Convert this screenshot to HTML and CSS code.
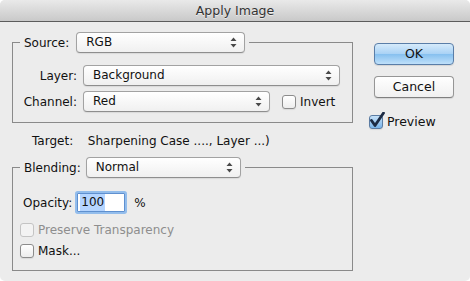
FILE: index.html
```html
<!DOCTYPE html>
<html lang="en">

<head>
    <meta charset="UTF-8">
    <title>Apply Image</title>
    <link rel="stylesheet" href="styles.css">
</head>

<body>
    <div class="window">
        <div class="titlebar">Apply Image</div>

        <div class="content">
            <div class="main">
                <fieldset class="group source">
                    <legend>
                        <span class="legend-label">Source:</span>
                        <span class="select w-source">RGB
                            <svg class="arrows" width="7" height="11" viewBox="0 0 7 11"><path d="M3.5 0.5 L6.5 4 H0.5 Z M3.5 10.5 L6.5 7 H0.5 Z" fill="#4a4a4a"/></svg>
                        </span>
                    </legend>
                    <div class="row">
                        <span class="lbl">Layer:</span>
                        <span class="select w-layer">Background
                            <svg class="arrows" width="7" height="11" viewBox="0 0 7 11"><path d="M3.5 0.5 L6.5 4 H0.5 Z M3.5 10.5 L6.5 7 H0.5 Z" fill="#4a4a4a"/></svg>
                        </span>
                    </div>
                    <div class="row">
                        <span class="lbl">Channel:</span>
                        <span class="select w-channel">Red
                            <svg class="arrows" width="7" height="11" viewBox="0 0 7 11"><path d="M3.5 0.5 L6.5 4 H0.5 Z M3.5 10.5 L6.5 7 H0.5 Z" fill="#4a4a4a"/></svg>
                        </span>
                        <span class="check invert-check"></span>
                        <span class="check-text">Invert</span>
                    </div>
                </fieldset>

                <div class="target">
                    <span class="target-label">Target:</span>
                    <span>Sharpening Case ...., Layer ...)</span>
                </div>

                <fieldset class="group blending">
                    <legend>
                        <span class="legend-label">Blending:</span>
                        <span class="select w-blend">Normal
                            <svg class="arrows" width="7" height="11" viewBox="0 0 7 11"><path d="M3.5 0.5 L6.5 4 H0.5 Z M3.5 10.5 L6.5 7 H0.5 Z" fill="#4a4a4a"/></svg>
                        </span>
                    </legend>
                    <div class="opacity-row">
                        <span>Opacity:</span>
                        <span class="field"><span class="selected">100</span></span>
                        <span class="percent">%</span>
                    </div>
                    <div class="check-row disabled">
                        <span class="check"></span>
                        <span class="check-text">Preserve Transparency</span>
                    </div>
                    <div class="check-row">
                        <span class="check"></span>
                        <span class="check-text">Mask...</span>
                    </div>
                </fieldset>
            </div>

            <div class="side">
                <div class="button default">OK</div>
                <div class="button">Cancel</div>
                <div class="preview">
                    <span class="check checked">
                        <svg class="tick" width="16" height="17" viewBox="0 0 16 17"><path d="M2.5 8.5 L6 13.5 L14.5 1" fill="none" stroke="#1c2b44" stroke-width="2.8" stroke-linecap="round" stroke-linejoin="round"/></svg>
                    </span>
                    <span class="check-text">Preview</span>
                </div>
            </div>
        </div>
    </div>
</body>

</html>
```

FILE: styles.css
```css
body {
    margin: 0;
    background-color: #fff;
    font-family: 'DejaVu Sans', 'Lucida Grande', sans-serif;
    font-size: 12px;
    color: #111;
}

.window {
    width: 470px;
    height: 281px;
    background-color: #ececec;
    border-radius: 5px;
    overflow: hidden;
}

.titlebar {
    height: 21px;
    line-height: 21px;
    text-align: center;
    font-size: 12.5px;
    color: #333;
    text-shadow: 0 1px 0 rgba(255, 255, 255, 0.6);
    background: linear-gradient(#e9e9e9, #c9c9c9);
    border-bottom: 1px solid #5c5c5c;
}

.content {
    display: flex;
}

.main {
    margin-left: 12px;
    width: 341px;
}

.group {
    box-sizing: border-box;
    width: 341px;
    margin: 0;
    border: 1px solid #8a8a8a;
    border-radius: 0;
    padding: 12px 10px 10px 7px;
}

.group legend {
    display: flex;
    align-items: center;
    padding: 0 4px;
}

.source {
    margin-top: 10px;
}

.blending {
    margin-top: 9px;
    padding-top: 15px;
    padding-bottom: 12px;
}

.select {
    position: relative;
    box-sizing: border-box;
    display: inline-block;
    height: 21px;
    line-height: 19px;
    padding-left: 9px;
    background: linear-gradient(#ffffff, #f0f0f0);
    border: 1px solid #a2a2a2;
    border-bottom-color: #8e8e8e;
    border-radius: 4px;
    box-shadow: 0 1px 1px rgba(0, 0, 0, 0.08);
}

.arrows {
    position: absolute;
    right: 7px;
    top: 4px;
}

.w-source {
    width: 169px;
    margin-left: 7px;
}

.w-layer {
    width: 257px;
}

.w-channel {
    width: 187px;
}

.w-blend {
    width: 155px;
    margin-left: 5px;
}

.row {
    display: flex;
    align-items: center;
    height: 21px;
}

.row + .row {
    margin-top: 5px;
}

.lbl {
    width: 57px;
    margin-right: 6px;
    text-align: right;
}

.check {
    position: relative;
    box-sizing: border-box;
    display: inline-block;
    width: 14px;
    height: 14px;
    background: linear-gradient(#ffffff, #ededed);
    border: 1px solid #8c8c8c;
    border-radius: 3px;
    box-shadow: 0 1px 1px rgba(0, 0, 0, 0.08);
}

.check-text {
    margin-left: 4px;
}

.invert-check {
    margin-left: 12px;
}

.target {
    margin-top: 11px;
    padding-left: 20px;
    height: 14px;
    line-height: 14px;
}

.target-label {
    display: inline-block;
    width: 52px;
}

.opacity-row {
    display: flex;
    align-items: center;
    height: 19px;
    padding-left: 3px;
}

.field {
    box-sizing: border-box;
    display: inline-block;
    width: 48px;
    height: 19px;
    line-height: 17px;
    margin-left: 5px;
    padding-left: 2px;
    background-color: #fff;
    border: 1px solid #5f90cf;
    box-shadow: 0 0 0 2px #93bdec;
    border-radius: 1px;
}

.selected {
    display: inline-block;
    padding: 0 1px;
    background-color: #b5d5ff;
}

.percent {
    margin-left: 9px;
}

.check-row {
    display: flex;
    align-items: center;
    height: 14px;
    margin-top: 7px;
}

.opacity-row + .check-row {
    margin-top: 11px;
}

.disabled {
    color: #8e8e8e;
}

.disabled .check {
    border-color: #c4c4c4;
    background: #f3f3f3;
    box-shadow: none;
}

.side {
    margin-left: 16px;
    padding-top: 21px;
}

.button {
    box-sizing: border-box;
    width: 80px;
    height: 22px;
    line-height: 20px;
    margin-left: 5px;
    text-align: center;
    font-size: 12.5px;
    background: linear-gradient(#ffffff, #f0f0f0);
    border: 1px solid #969696;
    border-bottom-color: #7f7f7f;
    border-radius: 4px;
    box-shadow: 0 1px 1px rgba(0, 0, 0, 0.1);
}

.button + .button {
    margin-top: 11px;
}

.default {
    background: linear-gradient(#d6ebfb, #a9d2f5 50%, #86c0ef 51%, #bfe0fa);
    border-color: #5a7ea8;
}

.preview {
    display: flex;
    align-items: center;
    margin-top: 16px;
    font-size: 12.5px;
}

.checked {
    background: linear-gradient(#c6e1f8, #79b4ea);
    border-color: #5b7ca3;
}

.tick {
    position: absolute;
    left: -1px;
    top: -4px;
}
```
